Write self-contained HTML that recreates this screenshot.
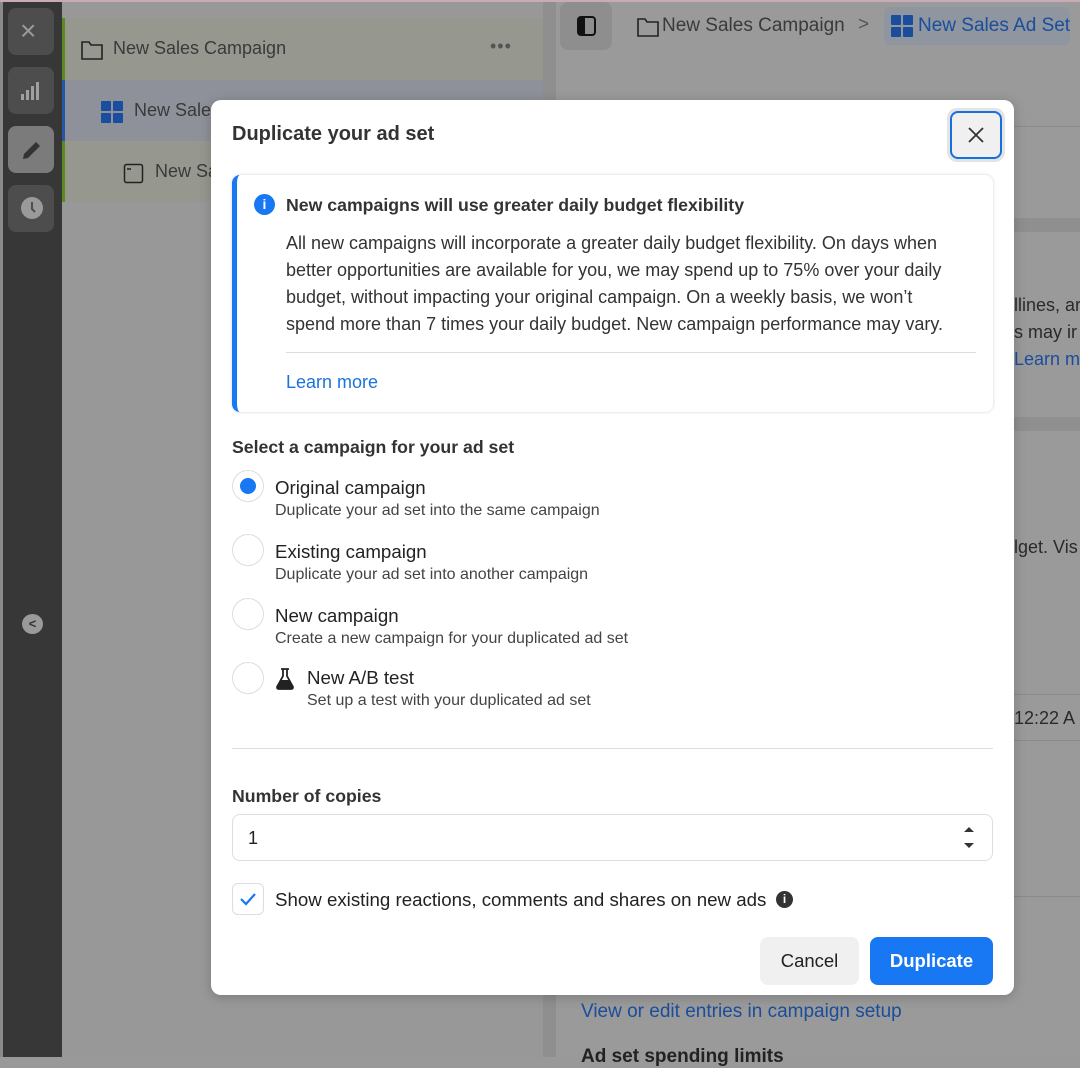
<!DOCTYPE html>
<html><head><meta charset="utf-8"><style>
*{box-sizing:border-box;margin:0;padding:0}
body{width:1080px;height:1057px;overflow:hidden;position:relative;background:#999;font-family:"Liberation Sans",Arial,sans-serif;color:#1c1e21}
.a{position:absolute}
.t{white-space:nowrap}
</style></head><body>
<div class="a" style="left:0;top:0;width:1080px;height:2px;background:#c9aab9"></div>
<!-- left dark rail -->
<div class="a" style="left:0;top:2px;width:62px;height:1055px;background:#373737"></div>
<div class="a" style="left:0;top:2px;width:3px;height:1055px;background:#8a8a8a"></div>
<div class="a" style="left:8px;top:8px;width:46px;height:47px;border-radius:8px;background:#4d4d4d"></div>
<div class="a t" style="left:20px;top:16px;font-size:28px;color:#9a9a9a;line-height:30px">×</div>
<div class="a" style="left:8px;top:67px;width:46px;height:47px;border-radius:8px;background:#4d4d4d"></div>
<svg class="a" style="left:20px;top:80px" width="22" height="22"><g fill="#a0a0a0"><rect x="1" y="14" width="3" height="6"/><rect x="6" y="10" width="3" height="10"/><rect x="11" y="6" width="3" height="14"/><rect x="16" y="2" width="3" height="18"/></g></svg>
<div class="a" style="left:8px;top:126px;width:46px;height:47px;border-radius:8px;background:#7b7b7b"></div>
<svg class="a" style="left:20px;top:138px" width="24" height="24"><path d="M3 21l1-5L16 4l4 4L8 20z" fill="#333"/></svg>
<div class="a" style="left:8px;top:185px;width:46px;height:47px;border-radius:8px;background:#4d4d4d"></div>
<div class="a" style="left:21px;top:197px;width:22px;height:22px;border-radius:50%;background:#9a9a9a"></div>
<svg class="a" style="left:21px;top:197px" width="22" height="22"><path d="M11 5v7l3 3" stroke="#4d4d4d" stroke-width="2" fill="none"/></svg>
<div class="a" style="left:22px;top:614px;width:21px;height:20px;border-radius:50%;background:#9a9a9a;font-size:13px;color:#333;text-align:center;line-height:20px;font-weight:bold">&lt;</div>
<!-- side panel -->
<div class="a" style="left:62px;top:2px;width:481px;height:1055px;background:#989898"></div>
<div class="a" style="left:62px;top:18px;width:481px;height:62px;background:#969890;border-left:3px solid #5c8a1e"></div>
<div class="a" style="left:62px;top:80px;width:481px;height:61px;background:#8e9199;border-left:3px solid #2557a6"></div>
<div class="a" style="left:62px;top:141px;width:481px;height:61px;background:#969890;border-left:3px solid #5c8a1e"></div>
<svg class="a" style="left:80px;top:39px" width="24" height="22"><path d="M2 3h7l2 3h11v14H2z" fill="none" stroke="#222" stroke-width="1.6"/></svg>
<div class="a t" style="left:113px;top:38px;font-size:18px;color:#3a3a3a">New Sales Campaign</div>
<div class="a t" style="left:490px;top:36px;font-size:18px;color:#555;letter-spacing:1px">•••</div>
<svg class="a" style="left:101px;top:101px" width="22" height="22"><g fill="#1a4d9c"><rect x="0" y="0" width="10" height="10" rx="1"/><rect x="12" y="0" width="10" height="10" rx="1"/><rect x="0" y="12" width="10" height="10" rx="1"/><rect x="12" y="12" width="10" height="10" rx="1"/></g></svg>
<div class="a t" style="left:134px;top:100px;font-size:18px;color:#3a3a3a">New Sale</div>
<svg class="a" style="left:123px;top:163px" width="22" height="22"><rect x="1.5" y="1.5" width="18" height="18" rx="2" fill="none" stroke="#222" stroke-width="1.5"/><path d="M4 6h4" stroke="#222" stroke-width="1.5"/></svg>
<div class="a t" style="left:155px;top:161px;font-size:18px;color:#3a3a3a">New Sa</div>
<!-- main -->
<div class="a" style="left:543px;top:2px;width:13px;height:1055px;background:#8f8f8f"></div>
<div class="a" style="left:556px;top:2px;width:524px;height:1055px;background:#9a9a9a"></div>
<div class="a" style="left:560px;top:2px;width:52px;height:48px;border-radius:8px;background:#8e8e8e"></div>
<svg class="a" style="left:576px;top:15px" width="22" height="22"><rect x="2" y="2" width="17" height="18" rx="3" fill="none" stroke="#111" stroke-width="2"/><rect x="3" y="3" width="6" height="16" fill="#111"/></svg>
<svg class="a" style="left:636px;top:16px" width="24" height="22"><path d="M2 3h7l2 3h11v14H2z" fill="none" stroke="#222" stroke-width="1.6"/></svg>
<div class="a t" style="left:662px;top:15px;font-size:19px;color:#3a3a3a">New Sales Campaign</div>
<div class="a t" style="left:858px;top:14px;font-size:19px;color:#555">&gt;</div>
<div class="a" style="left:884px;top:7px;width:186px;height:38px;border-radius:6px;background:#8f96a0"></div>
<svg class="a" style="left:891px;top:15px" width="22" height="22"><g fill="#1a4d9c"><rect x="0" y="0" width="10" height="10" rx="1"/><rect x="12" y="0" width="10" height="10" rx="1"/><rect x="0" y="12" width="10" height="10" rx="1"/><rect x="12" y="12" width="10" height="10" rx="1"/></g></svg>
<div class="a t" style="left:918px;top:15px;font-size:19px;color:#1a4d9c">New Sales Ad Set</div>
<div class="a" style="left:556px;top:126px;width:524px;height:1px;background:#8a8a8a"></div>
<div class="a" style="left:556px;top:218px;width:524px;height:14px;background:#8f8f8f"></div>
<div class="a t" style="left:1014px;top:295px;font-size:18px;color:#2a2a2a">llines, ar</div>
<div class="a t" style="left:1014px;top:322px;font-size:18px;color:#2a2a2a">s may ir</div>
<div class="a t" style="left:1014px;top:349px;font-size:18px;color:#1a4d9c">Learn m</div>
<div class="a" style="left:556px;top:417px;width:524px;height:14px;background:#8f8f8f"></div>
<div class="a t" style="left:1014px;top:537px;font-size:18px;color:#2a2a2a">lget. Vis</div>
<div class="a" style="left:1014px;top:694px;width:66px;height:1px;background:#8a8a8a"></div>
<div class="a t" style="left:1014px;top:708px;font-size:18px;color:#2a2a2a">12:22 A</div>
<div class="a" style="left:1014px;top:740px;width:66px;height:1px;background:#8a8a8a"></div>
<div class="a" style="left:1014px;top:896px;width:66px;height:1px;background:#8a8a8a"></div>
<div class="a t" style="left:581px;top:1001px;font-size:19px;color:#1a4d9c">View or edit entries in campaign setup</div>
<div class="a t" style="left:581px;top:1046px;font-size:19px;color:#222;font-weight:bold">Ad set spending limits</div>
<!-- modal -->
<div class="a" style="left:211px;top:100px;width:803px;height:895px;background:#fff;border-radius:10px;box-shadow:0 2px 12px rgba(0,0,0,.2)"></div>
<div class="a t" style="left:232px;top:123px;font-size:20px;font-weight:bold;color:#333">Duplicate your ad set</div>
<div class="a" style="left:947px;top:108px;width:58px;height:54px;border-radius:10px;background:#e4e4e4"></div>
<div class="a" style="left:950px;top:111px;width:52px;height:48px;border-radius:8px;background:#f0f0f0;border:2px solid #1670e0"></div>
<svg class="a" style="left:967px;top:126px" width="18" height="18"><path d="M2 2L16 16M16 2L2 16" stroke="#333" stroke-width="1.8"/></svg>
<!-- banner -->
<div class="a" style="left:232px;top:175px;width:761px;height:237px;border-radius:8px;background:#fff;box-shadow:0 0 3px rgba(0,0,0,.18);border-left:5px solid #1877f2"></div>
<div class="a" style="left:254px;top:194px;width:21px;height:21px;border-radius:50%;background:#1877f2;color:#fff;font-size:14px;font-weight:bold;text-align:center;line-height:21px">i</div>
<div class="a t" style="left:286px;top:195px;font-size:17.7px;font-weight:bold;color:#333">New campaigns will use greater daily budget flexibility</div>
<div class="a t" style="left:286px;top:230px;font-size:18px;line-height:27px;color:#333">All new campaigns will incorporate a greater daily budget flexibility. On days when<br>better opportunities are available for you, we may spend up to 75% over your daily<br>budget, without impacting your original campaign. On a weekly basis, we won’t<br>spend more than 7 times your daily budget. New campaign performance may vary.</div>
<div class="a" style="left:286px;top:352px;width:690px;height:1px;background:#ddd"></div>
<div class="a t" style="left:286px;top:372px;font-size:18px;color:#1a73d9">Learn more</div>
<div class="a t" style="left:232px;top:437px;font-size:17.7px;font-weight:bold;color:#333">Select a campaign for your ad set</div>
<!-- radios -->
<div class="a" style="left:232px;top:470px;width:32px;height:32px;border-radius:50%;border:1px solid #ddd"></div>
<div class="a" style="left:240px;top:478px;width:16px;height:16px;border-radius:50%;background:#1877f2"></div>
<div class="a t" style="left:275px;top:477px;font-size:18.7px;color:#222">Original campaign</div>
<div class="a t" style="left:275px;top:502px;font-size:16px;color:#444">Duplicate your ad set into the same campaign</div>
<div class="a" style="left:232px;top:534px;width:32px;height:32px;border-radius:50%;border:1px solid #ddd"></div>
<div class="a t" style="left:275px;top:541px;font-size:18.7px;color:#222">Existing campaign</div>
<div class="a t" style="left:275px;top:566px;font-size:16px;color:#444">Duplicate your ad set into another campaign</div>
<div class="a" style="left:232px;top:598px;width:32px;height:32px;border-radius:50%;border:1px solid #ddd"></div>
<div class="a t" style="left:275px;top:605px;font-size:18.7px;color:#222">New campaign</div>
<div class="a t" style="left:275px;top:630px;font-size:16px;color:#444">Create a new campaign for your duplicated ad set</div>
<div class="a" style="left:232px;top:662px;width:32px;height:32px;border-radius:50%;border:1px solid #ddd"></div>
<svg class="a" style="left:275px;top:667px" width="20" height="24"><path d="M6 2h8M8 2v7L2 20q0 2 2 2h12q2 0 2-2L12 9V2" fill="none" stroke="#222" stroke-width="1.8"/><path d="M5 13h10l3 7q0 2-2 2H4q-2 0-2-2z" fill="#222"/></svg>
<div class="a t" style="left:307px;top:667px;font-size:18.7px;color:#222">New A/B test</div>
<div class="a t" style="left:307px;top:692px;font-size:16px;color:#444">Set up a test with your duplicated ad set</div>
<div class="a" style="left:232px;top:748px;width:761px;height:1px;background:#ddd"></div>
<div class="a t" style="left:232px;top:786px;font-size:17.7px;font-weight:bold;color:#333">Number of copies</div>
<div class="a" style="left:232px;top:814px;width:761px;height:47px;border-radius:8px;border:1px solid #ddd"></div>
<div class="a t" style="left:248px;top:828px;font-size:18px;color:#222">1</div>
<svg class="a" style="left:962px;top:825px" width="14" height="26"><path d="M2 7L7 2L12 7z M2 18L7 23L12 18z" fill="#333"/></svg>
<div class="a" style="left:232px;top:883px;width:32px;height:32px;border-radius:6px;border:1px solid #ddd"></div>
<svg class="a" style="left:238px;top:889px" width="20" height="20"><path d="M3 10l5 5L17 5" fill="none" stroke="#1877f2" stroke-width="2.2"/></svg>
<div class="a t" style="left:275px;top:889px;font-size:18.7px;color:#222">Show existing reactions, comments and shares on new ads</div>
<div class="a" style="left:776px;top:891px;width:17px;height:17px;border-radius:50%;background:#333;color:#fff;font-size:12px;font-weight:bold;text-align:center;line-height:17px">i</div>
<div class="a" style="left:760px;top:937px;width:99px;height:48px;border-radius:8px;background:#f0f0f0;font-size:18.5px;color:#222;text-align:center;line-height:48px">Cancel</div>
<div class="a" style="left:870px;top:937px;width:123px;height:48px;border-radius:8px;background:#1877f2;font-size:18.5px;color:#fff;font-weight:bold;text-align:center;line-height:48px">Duplicate</div>
</body></html>
